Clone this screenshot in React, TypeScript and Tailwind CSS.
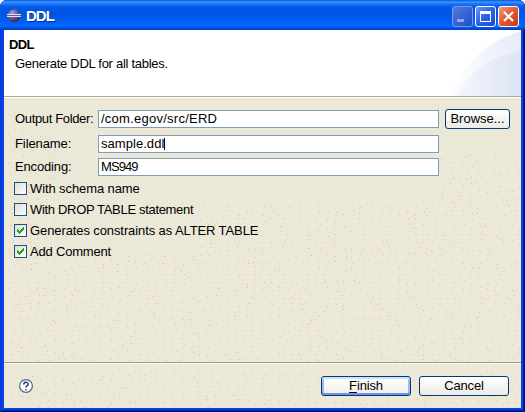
import React from "react";

const speckles = (() => {
  let seed = 17;
  const rand = () => {
    seed = (seed * 16807) % 2147483647;
    return seed / 2147483647;
  };
  const out: { x: number; y: number }[] = [];
  for (let y = 36; y < 310; y += 7) {
    for (let x = 4; x < 515; x += 9) {
      const px = Math.round(x + rand() * 6);
      const py = Math.round(y + rand() * 5);
      const quiet = (py < 108 && px > 85 && px < 436) || (py < 155 && px < 190 && px > 60) || (py > 264 && py < 276) || (py < 56 && px > 420);
      if (!quiet && rand() > 0.22) out.push({ x: px, y: py });
    }
  }
  return out;
})();

function Speckle() {
  return (
    <svg className="absolute inset-0 -z-10" width="517" height="311" shapeRendering="crispEdges">
      <defs>
        <pattern id="grain" width="4" height="4" patternUnits="userSpaceOnUse">
          <rect width="4" height="4" fill="#ebe8d8" />
          <rect x="0" y="0" width="1" height="1" fill="#eeecdf" />
          <rect x="2" y="2" width="1" height="1" fill="#e7e5d3" />
        </pattern>
      </defs>
      <rect y="1" width="517" height="310" fill="url(#grain)" />
      {speckles.map((p, i) => (
        <rect key={i} x={p.x} y={p.y} width="1" height="1" fill="#f7b3a0" />
      ))}
    </svg>
  );
}

function Field({ label, value, labelClass, valueClass, className, caret }: { label: string; value: string; labelClass: string; valueClass: string; className: string; caret?: boolean }) {
  return (
    <div className={"flex h-[18px] items-center " + className}>
      <label className={"w-[83px] shrink-0 whitespace-nowrap leading-[18px] " + labelClass}>{label}</label>
      <div className="flex h-[18px] w-[341px] items-center border border-[#7f9db9] bg-white pl-[2px]">
        <span className={"whitespace-nowrap leading-[16px] " + valueClass}>{value}</span>
        {caret && <span className="h-[12px] w-px bg-black" />}
      </div>
    </div>
  );
}

function Check({ label, on, textClass }: { label: string; on?: boolean; textClass: string }) {
  return (
    <div className="flex h-[21px] items-center">
      <span className="flex size-[13px] shrink-0 items-center justify-center border border-[#1c5180] bg-linear-to-br from-[#dcdcd7] to-white">
        {on && (
          <svg width="7" height="7" shapeRendering="crispEdges">
            <path d="M0 2h1v1h1v1h1v-1h1v-1h1v-1h1v-1h1v3h-1v1h-1v1h-1v1h-1v1h-1v-1h-1v-1h-1z" fill="#21a121" />
          </svg>
        )}
      </span>
      <span className={"ml-[3px] whitespace-nowrap leading-[18px] " + textClass}>{label}</span>
    </div>
  );
}

export default function App() {
  return (
    <div className="flex h-[412px] w-[525px] flex-col overflow-hidden rounded-t-[7px] bg-[#0842e0] font-['Liberation_Sans',sans-serif] text-[13px] text-black shadow-[inset_1px_0_#0831d9,inset_-1px_0_#00138c,inset_-2px_0_#001ea0,inset_0_-1px_#00138c,inset_0_-2px_#001ea0]">
      <div className="flex h-[30px] shrink-0 items-start bg-[linear-gradient(180deg,#0058d8_0px,#3f93ff_2px,#1676f8_4px,#0259e5_7px,#0054e3_14px,#0060f8_22px,#0668ff_26px,#0052dd_28px,#0140bd_30px)] pl-[7px] pr-[6px]">
        <svg className="mt-[9px]" width="14" height="14" viewBox="0 0 14 14">
          <defs>
            <radialGradient id="orb" cx="35%" cy="25%" r="80%">
              <stop offset="0" stopColor="#aaa0c5" />
              <stop offset="0.5" stopColor="#6a5a99" />
              <stop offset="1" stopColor="#2b2463" />
            </radialGradient>
          </defs>
          <circle cx="7" cy="7" r="6.5" fill="url(#orb)" />
          <path d="M0 5.5h14M0 7.5h14" stroke="#dce2fa" strokeWidth="1" />
          <path d="M0 6.5h14" stroke="#5a5aa6" strokeWidth="1" />
        </svg>
        <span className="ml-[5px] mt-[7px] text-[15px] font-bold leading-[18px] tracking-[-1px] text-white [text-shadow:1px_1px_#092d7c]">DDL</span>
        <div className="ml-auto mt-[6px] flex gap-[2px]">
          <span className="h-[21px] w-[21px] rounded-[3px] border border-[#7a9bed] bg-linear-to-br from-[#5379dd] to-[#1f4ccf]">
            <span className="ml-[4px] mt-[12px] block h-[3px] w-[7px] bg-[#8ea7ed]" />
          </span>
          <span className="flex h-[21px] w-[21px] items-center justify-center rounded-[3px] border border-white bg-linear-to-br from-[#6c94f2] via-[#2b61e6] to-[#174de0]">
            <span className="h-[11px] w-[11px] border border-t-[3px] border-white" />
          </span>
          <span className="flex h-[21px] w-[21px] items-center justify-center rounded-[3px] border border-white bg-linear-to-br from-[#ef9a7e] via-[#e2562f] to-[#c83b12]">
            <svg width="11" height="11">
              <path d="M1 1L10 10M10 1L1 10" stroke="white" strokeWidth="2.2" />
            </svg>
          </span>
        </div>
      </div>

      <div className="ml-[4px] mr-[4px] flex h-[378px] w-[517px] shrink-0 flex-col bg-[#ebe8d8]">
        <div className="flex h-[66px] shrink-0 justify-between bg-white">
          <div className="pl-[5px] pt-[6px]">
            <div className="text-[13px] font-bold leading-[17px] tracking-[-0.7px]">DDL</div>
            <div className="ml-[6px] mt-[2px] whitespace-nowrap leading-[17px] tracking-[-0.28px]">Generate DDL for all tables.</div>
          </div>
          <svg width="75" height="66">
            <defs>
              <linearGradient id="sweep" x1="0" x2="1" y1="0.3" y2="0">
                <stop offset="0" stopColor="#fbfcff" />
                <stop offset="1" stopColor="#e6ebf8" />
              </linearGradient>
              <linearGradient id="sweepInner" x1="0" x2="1" y1="0" y2="0">
                <stop offset="0" stopColor="#f5f7fd" />
                <stop offset="1" stopColor="#dde3f5" />
              </linearGradient>
            </defs>
            <path d="M5 66C12 42 37 12 75 1V66Z" fill="url(#sweep)" />
            <path d="M10 66C22 43 43 25 75 22V66Z" fill="url(#sweepInner)" />
          </svg>
        </div>
        <div className="relative isolate flex h-[312px] flex-col border-t border-[#aca899] shadow-[inset_0_1px_white]">
          <Speckle />
          <div className="flex h-[266px] shrink-0 flex-col border-b border-[#9d9a88] pl-[11px] pt-[13px]">
            <div className="flex h-[18px] items-center">
              <Field className="" label="Output Folder:" value="/com.egov/src/ERD" labelClass="tracking-[-0.35px]" valueClass="tracking-[0.25px]" />
              <div className="ml-[6px] flex h-[20px] w-[65px] shrink-0 items-center justify-center rounded-[3px] border border-[#003c74] bg-linear-to-b from-white to-[#ecebe6]">Browse...</div>
            </div>
            <Field className="mt-[7px]" label="Filename:" value="sample.ddl" labelClass="tracking-[-0.1px]" valueClass="tracking-[0.05px]" caret />
            <Field className="mt-[5px]" label="Encoding:" value="MS949" labelClass="tracking-[-0.15px]" valueClass="tracking-[-0.9px]" />
            <div className="ml-[-1px] mt-[2px]">
              <Check label="With schema name" textClass="tracking-[-0.1px]" />
              <Check label="With DROP TABLE statement" textClass="tracking-[-0.32px]" />
              <Check on label="Generates constraints as ALTER TABLE" textClass="tracking-[-0.1px]" />
              <Check on label="Add Comment" textClass="tracking-[-0.2px]" />
            </div>
          </div>
          <div className="flex h-[45px] items-center border-t border-[#fffefa] pb-px pl-[15px] pr-[12px]">
            <svg width="14" height="14" viewBox="0 0 14 14">
              <circle cx="7" cy="7" r="6.4" fill="#fff" stroke="#536b96" strokeWidth="1.2" />
              <path d="M4.8 5.6C4.8 2.6 9.2 2.6 9.2 5.2C9.2 6.7 7 6.6 7 8.6M7 9.9V11.2" fill="none" stroke="#243f77" strokeWidth="1.5" />
            </svg>
            <div className="ml-auto flex h-[20px] w-[90px] items-center justify-center rounded-[3px] border border-[#003c74] bg-linear-to-b from-white to-[#efeee9] tracking-[-0.15px] shadow-[inset_0_-2px_#6f93e6,inset_0_2px_#cee0ff,inset_2px_0_#9ebaf0,inset_-2px_0_#9ebaf0]">
              <span><span className="underline underline-offset-2">F</span>inish</span>
            </div>
            <div className="ml-[8px] flex h-[20px] w-[90px] items-center justify-center rounded-[3px] border border-[#003c74] bg-linear-to-b from-white to-[#ecebe6] tracking-[-0.2px]">Cancel</div>
          </div>
        </div>
      </div>
    </div>
  );
}
